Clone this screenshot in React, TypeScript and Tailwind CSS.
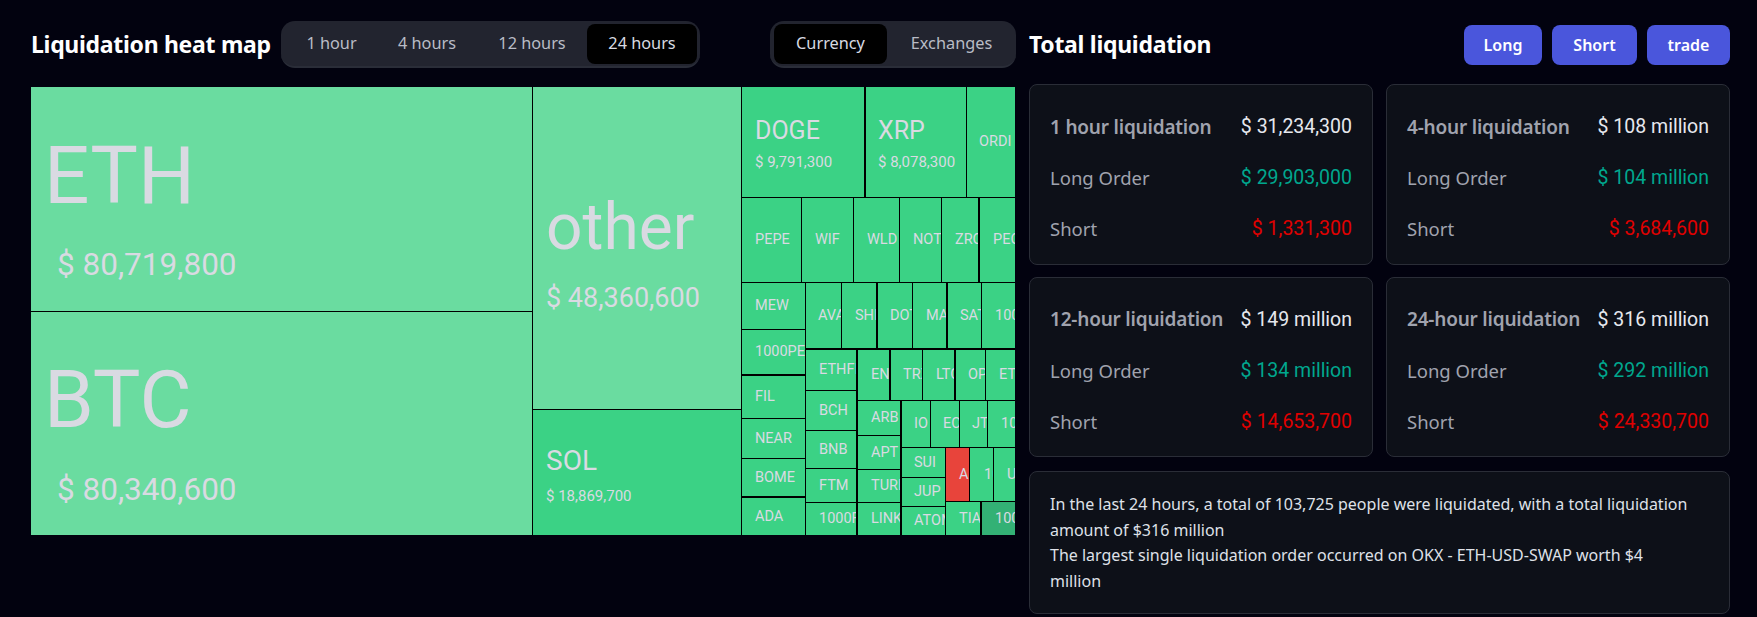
import type { ReactNode } from 'react'

function Tile({ name, className = '' }: { name: string; className?: string }) {
  return (
    <div className={`flex items-center pl-[13px] overflow-hidden whitespace-nowrap bg-[#3bd285] text-[14.5px] text-[#d9dae2] ${className}`}>
      {name}
    </div>
  )
}

function Big({ name, amount, className, nameClass, amountClass }: { name: string; amount: string; className: string; nameClass: string; amountClass: string }) {
  return (
    <div className={`flex flex-col justify-center overflow-hidden text-[#d9dae2] ${className}`}>
      <div className={nameClass}>{name}</div>
      <div className={amountClass}>{amount}</div>
    </div>
  )
}

function Segments({ items, active, className }: { items: { label: string; cls: string }[]; active: string; className: string }) {
  return (
    <div className={`flex items-center h-[47px] rounded-[14px] bg-[#22242f] ${className}`}>
      {items.map(item => (
        <div
          key={item.label}
          className={`flex items-center justify-center h-[40px] text-[16.3px] ${item.cls} ${
            item.label === active ? 'bg-black text-[#d8dae2] rounded-[8px]' : 'text-[#b9bcc6]'
          }`}
        >
          {item.label}
        </div>
      ))}
    </div>
  )
}

function Row({ label, value, labelClass, valueClass }: { label: string; value: string; labelClass: string; valueClass: string }) {
  return (
    <div className="flex items-center justify-between h-[51px]">
      <span className={`font-['Noto_Sans',sans-serif] text-[18.5px] whitespace-nowrap ${labelClass}`}>{label}</span>
      <span className={`text-[19.5px] whitespace-nowrap ${valueClass}`}>{value}</span>
    </div>
  )
}

function Card({ title, total, long, short, height }: { title: string; total: string; long: string; short: string; height: string }) {
  return (
    <div className={`flex flex-col justify-center pl-[20px] pr-[20px] pt-[7px] rounded-[8px] border border-[#2a2d37] bg-[#0d1018] ${height}`}>
      <Row label={title} value={total} labelClass="!text-[19px] text-[#a0a3ae] font-semibold tracking-[-0.2px]" valueClass="text-[#e6e8ee]" />
      <Row label="Long Order" value={long} labelClass="text-[#a0a3ae]" valueClass="text-[#00a78e]" />
      <Row label="Short" value={short} labelClass="text-[#a0a3ae]" valueClass="text-[#e00000]" />
    </div>
  )
}

function Btn({ children, className }: { children: ReactNode; className: string }) {
  return (
    <div className={`flex items-center justify-center h-[40px] rounded-[8px] bg-[#4a56dc] text-white text-[16px] font-semibold ${className}`}>
      {children}
    </div>
  )
}

function HeatMap() {
  return (
    <div className="flex gap-px w-[984px] h-[448px] mt-[19px] bg-black font-['Roboto',sans-serif]">
      {/* biggest coins */}
      <div className="flex flex-col gap-px w-[501px]">
        <Big
          name="ETH"
          amount="$ 80,719,800"
          className="h-[224px] bg-[#6adca0] pl-[13px] pt-[18px]"
          nameClass="text-[80px] leading-[90px]"
          amountClass="text-[31.5px] leading-[40px] pl-[13px] mt-[24px]"
        />
        <Big
          name="BTC"
          amount="$ 80,340,600"
          className="flex-1 bg-[#6adca0] pl-[13px] pt-[18px]"
          nameClass="text-[80px] leading-[90px]"
          amountClass="text-[31.5px] leading-[40px] pl-[13px] mt-[25px]"
        />
      </div>
      <div className="flex flex-col gap-px w-[208px]">
        <Big
          name="other"
          amount="$ 48,360,600"
          className="h-[322px] bg-[#6adca0] pl-[13px] pt-[10px]"
          nameClass="text-[64px] leading-[74px]"
          amountClass="text-[27px] leading-[34px] mt-[16px]"
        />
        <Big
          name="SOL"
          amount="$ 18,869,700"
          className="flex-1 bg-[#3bd285] pl-[13px] pt-[4px]"
          nameClass="text-[28px] leading-[34px]"
          amountClass="text-[15px] leading-[20px] mt-[8px]"
        />
      </div>
      <div className="flex flex-col gap-px flex-1 min-w-0">
        <div className="flex h-[110px]">
          <Big
            name="DOGE"
            amount="$ 9,791,300"
            className="w-[122px] bg-[#3bd285] pl-[13px] pt-[4px]"
            nameClass="text-[25px] leading-[30px]"
            amountClass="text-[15px] leading-[20px] mt-[6px]"
          />
          <Big
            name="XRP"
            amount="$ 8,078,300"
            className="w-[100px] ml-[2px] bg-[#3bd285] pl-[12px] pt-[4px]"
            nameClass="text-[25px] leading-[30px]"
            amountClass="text-[15px] leading-[20px] mt-[6px]"
          />
          <Tile name="ORDI" className="flex-1 ml-px !pl-[12px]" />
        </div>
        <div className="flex gap-px h-[84px]">
          <Tile name="PEPE" className="w-[59px]" />
          <Tile name="WIF" className="w-[51px]" />
          <Tile name="WLD" className="w-[45px]" />
          <Tile name="NOT" className="w-[41px]" />
          <Tile name="ZRO" className="w-[36px]" />
          <Tile name="PEOPLE" className="flex-1 ml-px" />
        </div>
        <div className="flex gap-px flex-1 min-h-0">
          <div className="flex flex-col gap-px w-[63px]">
            <Tile name="MEW" className="h-[46px]" />
            <Tile name="1000PEPE" className="h-[44px]" />
            <Tile name="FIL" className="h-[42px] mt-px" />
            <Tile name="NEAR" className="h-[39px]" />
            <Tile name="BOME" className="h-[37px]" />
            <Tile name="ADA" className="flex-1 mt-px" />
          </div>
          <div className="flex flex-col gap-[2px] flex-1 min-w-0">
            <div className="flex gap-px h-[65px]">
              <Tile name="AVAX" className="w-[35px] !pl-[12px]" />
              <Tile name="SHIB" className="w-[34px]" />
              <Tile name="DOT" className="w-[34px] ml-px !pl-[12px]" />
              <Tile name="MATIC" className="w-[33px]" />
              <Tile name="SATS" className="w-[33px] ml-px !pl-[12px]" />
              <Tile name="1000BONK" className="flex-1" />
            </div>
            <div className="flex gap-[2px] flex-1 min-h-0">
              <div className="flex flex-col gap-px w-[50px]">
                <Tile name="ETHFI" className="h-[40px]" />
                <Tile name="BCH" className="h-[39px]" />
                <Tile name="BNB" className="h-[37px]" />
                <Tile name="FTM" className="h-[33px]" />
                <Tile name="1000FLOKI" className="flex-1" />
              </div>
              <div className="flex flex-col gap-px flex-1 min-w-0">
                <div className="flex h-[50px]">
                  <Tile name="ENA" className="w-[31px]" />
                  <Tile name="TRX" className="w-[31px] ml-[2px] !pl-[12px]" />
                  <Tile name="LTC" className="w-[31px] ml-px" />
                  <Tile name="OP" className="w-[29px] ml-[2px] !pl-[12px]" />
                  <Tile name="ETC" className="flex-1 ml-px" />
                </div>
                <div className="flex gap-[2px] flex-1 min-h-0">
                  <div className="flex flex-col gap-px w-[42px]">
                    <Tile name="ARB" className="h-[34px]" />
                    <Tile name="APT" className="h-[33px]" />
                    <Tile name="TURBO" className="h-[32px]" />
                    <Tile name="LINK" className="flex-1" />
                  </div>
                  <div className="flex flex-col gap-px flex-1 min-w-0">
                    <div className="flex gap-px h-[46px]">
                      <Tile name="IO" className="w-[28px] !pl-[12px]" />
                      <Tile name="ECHO" className="w-[28px] !pl-[12px]" />
                      <Tile name="JTO" className="w-[27px] !pl-[12px]" />
                      <Tile name="1000X" className="flex-1" />
                    </div>
                    <div className="flex gap-px flex-1 min-h-0">
                      <div className="flex flex-col gap-px w-[43px]">
                        <Tile name="SUI" className="h-[29px] !pl-[12px]" />
                        <Tile name="JUP" className="h-[28px] !pl-[12px]" />
                        <Tile name="ATOM" className="flex-1 !pl-[12px]" />
                      </div>
                      <div className="flex flex-col gap-px flex-1 min-w-0">
                        <div className="flex gap-px h-[53px]">
                          <Tile name="AR" className="w-[23px] !bg-[#e8443b]" />
                          <Tile name="1000" className="w-[23px] !pl-[14px]" />
                          <Tile name="UNI" className="flex-1" />
                        </div>
                        <div className="flex flex-1 min-h-0">
                          <Tile name="TIA" className="w-[34px]" />
                          <Tile name="1000S" className="flex-1 ml-[2px] !bg-[#33b175]" />
                        </div>
                      </div>
                    </div>
                  </div>
                </div>
              </div>
            </div>
          </div>
        </div>
      </div>
    </div>
  )
}

export default function App() {
  return (
    <div className="flex h-[617px] overflow-hidden bg-[#02020f] pl-[31px] pt-[21px] font-['Roboto',sans-serif]">
      <div className="w-[985px]">
        <div className="flex items-center font-['Noto_Sans',sans-serif]">
          <h1 className="w-[250px] text-[23px] font-bold tracking-[-0.3px] text-white whitespace-nowrap">Liquidation heat map</h1>
          <Segments
            active="24 hours"
            className="pl-[5px] pr-[3px] border-b-2 border-[#2a2d38]"
            items={[
              { label: '1 hour', cls: 'w-[91px]' },
              { label: '4 hours', cls: 'w-[100px]' },
              { label: '12 hours', cls: 'w-[110px]' },
              { label: '24 hours', cls: 'w-[110px]' },
            ]}
          />
          <Segments
            active="Currency"
            className="ml-auto pl-[4px] border-b-2 border-[#2a2d38]"
            items={[
              { label: 'Currency', cls: 'w-[113px]' },
              { label: 'Exchanges', cls: 'w-[129px]' },
            ]}
          />
        </div>
        <HeatMap />
      </div>

      <div className="w-[701px] ml-[13px]">
        <div className="flex items-center h-[47px] font-['Noto_Sans',sans-serif]">
          <h2 className="text-[23px] font-bold tracking-[-0.3px] text-white">Total liquidation</h2>
          <div className="flex gap-[10px] ml-auto">
            <Btn className="w-[78px]">Long</Btn>
            <Btn className="w-[85px]">Short</Btn>
            <Btn className="w-[83px]">trade</Btn>
          </div>
        </div>
        <div className="grid grid-cols-2 gap-x-[13px] gap-y-[12px] mt-[16px]">
          <Card height="h-[181px]" title="1 hour liquidation" total="$ 31,234,300" long="$ 29,903,000" short="$ 1,331,300" />
          <Card height="h-[181px]" title="4-hour liquidation" total="$ 108 million" long="$ 104 million" short="$ 3,684,600" />
          <Card height="h-[180px]" title="12-hour liquidation" total="$ 149 million" long="$ 134 million" short="$ 14,653,700" />
          <Card height="h-[180px]" title="24-hour liquidation" total="$ 316 million" long="$ 292 million" short="$ 24,330,700" />
        </div>
        <div className="mt-[14px] h-[143px] pl-[20px] pr-[31px] pt-[20px] rounded-[8px] border border-[#2a2d37] bg-[#0d1018] font-['Noto_Sans',sans-serif] text-[16px] leading-[25.5px] text-[#dfe1e8]">
          In the last 24 hours, a total of 103,725 people were liquidated, with a total liquidation amount of $316 million
          <br />
          The largest single liquidation order occurred on OKX - ETH-USD-SWAP worth $4 million
        </div>
      </div>
    </div>
  )
}
